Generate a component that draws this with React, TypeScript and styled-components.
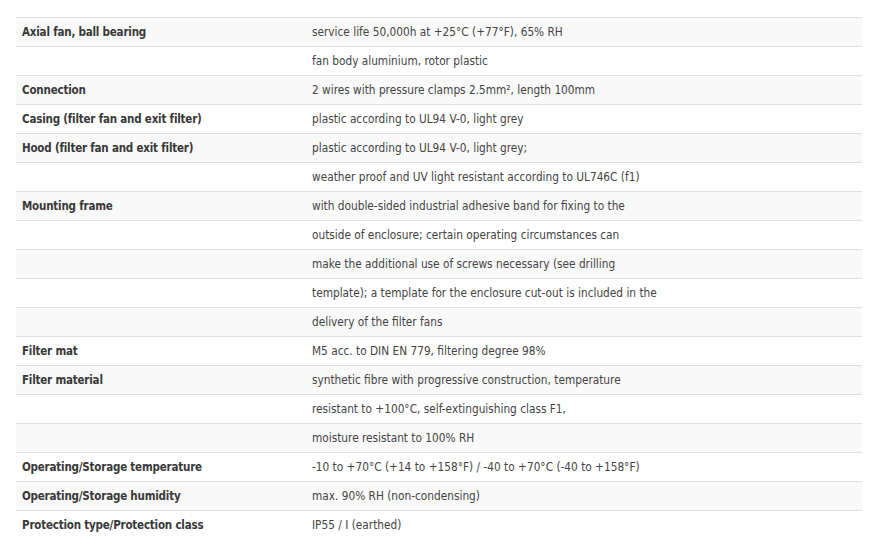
import React from "react";
import styled, { createGlobalStyle } from "styled-components";

const Global = createGlobalStyle`
  html, body { margin: 0; padding: 0; background: #fff; }
  body { font-family: "DejaVu Sans Condensed", "DejaVu Sans", sans-serif; font-size: 11.75px; color: #444; }
`;

const Page = styled.div`
  padding: 17px 12px 0 16px;
`;

const Table = styled.table`
  width: 846px;
  border-collapse: collapse;
  border-spacing: 0;
`;

const Row = styled.tr<{ $striped: boolean }>`
  background: ${(p) => (p.$striped ? "#f9f9f9" : "#fff")};
  border-top: 1px solid #dddddd;
`;

const Label = styled.td`
  width: 278px;
  padding: 5px 6px;
  line-height: 18px;
  font-size: 11.5px;
  letter-spacing: -0.2px;
  font-weight: bold;
  color: #383838;
  vertical-align: top;
`;

const Value = styled.td`
  padding: 5px 6px;
  line-height: 18px;
  color: #444;
  vertical-align: top;
`;

const rows: [string, string][] = [
  ["Axial fan, ball bearing", "service life 50,000h at +25°C (+77°F), 65% RH"],
  ["", "fan body aluminium, rotor plastic"],
  ["Connection", "2 wires with pressure clamps 2.5mm², length 100mm"],
  ["Casing (filter fan and exit filter)", "plastic according to UL94 V-0, light grey"],
  ["Hood (filter fan and exit filter)", "plastic according to UL94 V-0, light grey;"],
  ["", "weather proof and UV light resistant according to UL746C (f1)"],
  ["Mounting frame", "with double-sided industrial adhesive band for fixing to the"],
  ["", "outside of enclosure; certain operating circumstances can"],
  ["", "make the additional use of screws necessary (see drilling"],
  ["", "template); a template for the enclosure cut-out is included in the"],
  ["", "delivery of the filter fans"],
  ["Filter mat", "M5 acc. to DIN EN 779, filtering degree 98%"],
  ["Filter material", "synthetic fibre with progressive construction, temperature"],
  ["", "resistant to +100°C, self-extinguishing class F1,"],
  ["", "moisture resistant to 100% RH"],
  ["Operating/Storage temperature", "-10 to +70°C (+14 to +158°F) / -40 to +70°C (-40 to +158°F)"],
  ["Operating/Storage humidity", "max. 90% RH (non-condensing)"],
  ["Protection type/Protection class", "IP55 / I (earthed)"],
];

export default function App() {
  return (
    <>
      <Global />
      <Page>
        <Table>
          <tbody>
            {rows.map(([l, v], i) => (
              <Row key={i} $striped={i % 2 === 0}>
                <Label>{l}</Label>
                <Value>{v}</Value>
              </Row>
            ))}
          </tbody>
        </Table>
      </Page>
    </>
  );
}
